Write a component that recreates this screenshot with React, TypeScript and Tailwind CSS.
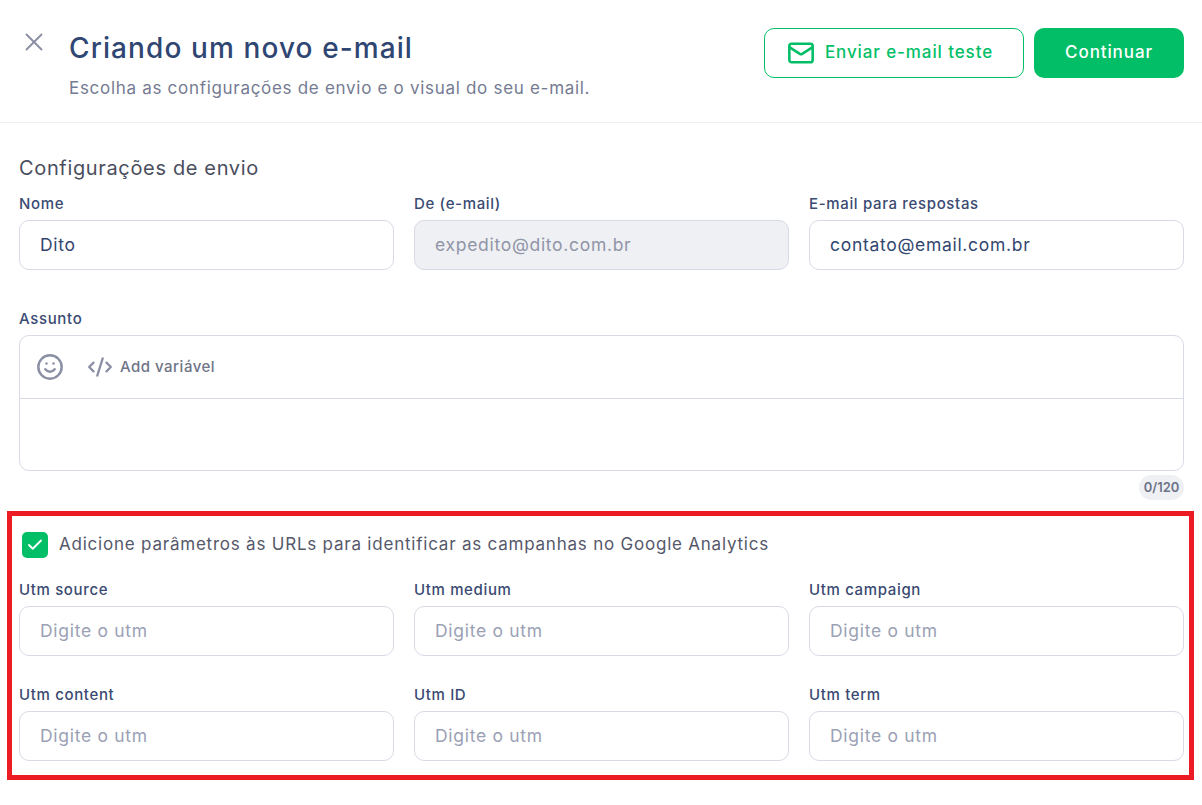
import { Check, Code2, Mail, Smile, X } from "lucide-react";

const inputBase =
  "h-[50px] w-full rounded-[10px] border border-[#d8dae5] px-5 pb-[2px] text-[17.5px] tracking-[0.7px] outline-none";

//label + input
function Field({
  label,
  value,
  placeholder,
  disabled,
}: {
  label: string;
  value?: string;
  placeholder?: string;
  disabled?: boolean;
}) {
  return (
    <div className="flex flex-col">
      <label className="mb-[6px] h-[20px] text-[15px] leading-[20px] font-medium tracking-[0.65px] text-[#3a4a72]">
        {label}
      </label>
      <input
        className={
          disabled
            ? `${inputBase} bg-[#eff0f3] text-[#9095a8]`
            : `${inputBase} bg-white text-[#33466f] placeholder:text-[#9ba1b5]`
        }
        defaultValue={value}
        placeholder={placeholder}
        disabled={disabled}
      />
    </div>
  );
}

export default function App() {
  return (
    <div className="h-[805px] w-[1202px] overflow-hidden bg-white font-['Inter',sans-serif]">
      {/* header */}
      <header className="flex h-[123px] items-start justify-between border-b border-[#eeeff2] pr-[18px] pl-[19px]">
        <div className="flex">
          <X className="mt-[27px] size-[30px] text-[#8a8fa3]" strokeWidth={1.5} />
          <div className="ml-5 pt-[29px]">
            <h1 className="text-[28px] leading-[38px] font-medium tracking-[1.1px] text-[#2f4673]">
              Criando um novo e-mail
            </h1>
            <p className="mt-[9px] text-[17px] leading-[24px] tracking-[0.7px] text-[#757b92]">
              Escolha as configurações de envio e o visual do seu e-mail.
            </p>
          </div>
        </div>
        <div className="mt-[28px] flex gap-[10px]">
          <button className="flex h-[50px] w-[260px] items-center justify-center gap-[10px] rounded-[10px] border border-[#02bf67] bg-white pr-2 text-[17px] font-medium tracking-[0.9px] text-[#02bf67]">
            <Mail className="size-[28px]" strokeWidth={2.2} />
            Enviar e-mail teste
          </button>
          <button className="h-[50px] w-[150px] rounded-[10px] bg-[#02bf67] text-[17px] font-medium tracking-[0.9px] text-white">
            Continuar
          </button>
        </div>
      </header>

      <main className="pr-[18px] pl-[19px]">
        <h2 className="mt-[31px] mb-[12px] text-[20px] leading-[28px] font-normal tracking-[0.65px] text-[#4a4e5e]">
          Configurações de envio
        </h2>
        <div className="grid grid-cols-3 gap-5">
          <Field label="Nome" value="Dito" />
          <Field label="De (e-mail)" value="expedito@dito.com.br" disabled />
          <Field label="E-mail para respostas" value="contato@email.com.br" />
        </div>

        {/* assunto */}
        <label className="mt-[39px] mb-[6px] block h-[20px] text-[15px] leading-[20px] font-medium tracking-[0.65px] text-[#3a4a72]">
          Assunto
        </label>
        <div className="h-[136px] rounded-[10px] border border-[#d8dae5]">
          <div className="flex h-[63px] items-center border-b border-[#d8dae5] pl-[16px]">
            <Smile className="size-[28px] text-[#8a8fa3]" strokeWidth={2.1} />
            <Code2 className="ml-[23px] size-[26px] text-[#8a8fa3]" strokeWidth={2.1} />
            <span className="ml-[7px] text-[15px] font-medium tracking-[0.5px] text-[#6f7488]">
              Add variável
            </span>
          </div>
        </div>
        <div className="mt-[4px] flex justify-end">
          <span className="flex h-[25px] w-[45px] items-center justify-center rounded-full bg-[#eff0f3] text-[13px] font-semibold text-[#6d7389]">
            0/120
          </span>
        </div>

        {/* utm */}
        <section className="mt-[11px] -mr-[10px] -ml-[12px] h-[269px] border-[5px] border-[#ed1c24] pr-[5px] pl-[7px]">
          <div className="mt-[16px] flex items-center">
            <span className="ml-[3px] flex size-[26px] items-center justify-center rounded-[5px] bg-[#02bf67]">
              <Check className="size-[18px] text-white" strokeWidth={2.5} />
            </span>
            <span className="ml-[11px] text-[17px] tracking-[0.78px] text-[#55586a]">
              Adicione parâmetros às URLs para identificar as campanhas no Google Analytics
            </span>
          </div>
          <div className="mt-[22px] grid grid-cols-3 gap-x-5 gap-y-[29px]">
            <Field label="Utm source" placeholder="Digite o utm" />
            <Field label="Utm medium" placeholder="Digite o utm" />
            <Field label="Utm campaign" placeholder="Digite o utm" />
            <Field label="Utm content" placeholder="Digite o utm" />
            <Field label="Utm ID" placeholder="Digite o utm" />
            <Field label="Utm term" placeholder="Digite o utm" />
          </div>
        </section>
      </main>
    </div>
  );
}
